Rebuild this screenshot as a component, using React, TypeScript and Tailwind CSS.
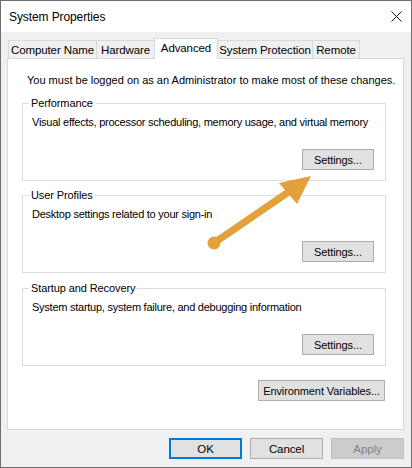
import React from "react";

const tabs = [
  { label: "Computer Name", w: "w-[89px]" },
  { label: "Hardware", w: "w-[59px]" },
  { label: "Advanced", w: "w-[64px]", active: true },
  { label: "System Protection", w: "w-[96px]" },
  { label: "Remote", w: "w-[48px]" },
];

function Tab({ label, w, active, first }: { label: string; w: string; active?: boolean; first?: boolean }) {
  if (active) {
    return (
      <div
        className={`${w} ${first ? "" : "-ml-px"} relative z-10 h-[21px] -mb-px bg-white border border-b-0 border-[#d9d9d9] flex items-center justify-center pb-[2px]`}
      >
        {label}
      </div>
    );
  }
  return (
    <div
      className={`${w} ${first ? "" : "-ml-px"} relative h-[18px] bg-[#f0f0f0] border border-b-0 border-[#d9d9d9] flex items-center justify-center pt-[1px]`}
    >
      {label}
    </div>
  );
}

function Btn({ children, className = "" }: { children: React.ReactNode; className?: string }) {
  return (
    <div
      className={`h-[21px] bg-[#e1e1e1] border border-[#adadad] flex items-center justify-center ${className}`}
    >
      {children}
    </div>
  );
}

function Group({ title, text, className = "" }: { title: string; text: string; className?: string }) {
  return (
    <div className={`relative ml-[14px] w-[364px] h-[78px] border border-[#dcdcdc] flex flex-col pt-[10px] pl-[9px] ${className}`}>
      <span className="absolute left-[6px] top-[-9px] bg-white px-[2px] leading-[16px]">{title}</span>
      <div className="h-[16px] leading-[16px] tracking-[-0.25px]">{text}</div>
      <Btn className="w-[72px] mt-[19px] self-end mr-[11px]">Settings...</Btn>
    </div>
  );
}

export default function App() {
  return (
    <div className="relative w-[412px] h-[468px] border border-[#6f6f6f] bg-[#f0f0f0] flex flex-col text-[11px] tracking-[-0.1px] leading-[16px] whitespace-nowrap text-black font-['Liberation_Sans',Arial,sans-serif]">
      {/* title bar */}
      <div className="h-[31px] bg-white flex items-center justify-between pl-[8px] pr-[9px]">
        <span className="text-[12px] tracking-[-0.1px]">System Properties</span>
        <svg width="11" height="11" viewBox="0 0 11 11" className="mt-[-1px]">
          <path d="M0.5 0.5 L10.5 10.5 M10.5 0.5 L0.5 10.5" stroke="#111" strokeWidth="1" />
        </svg>
      </div>

      {/* body */}
      <div className="flex-1 flex flex-col pl-[6px] pr-[7px] pt-[6px]">
        <div className="h-[20px] flex items-end pl-[1px] text-[11.5px]">
          {tabs.map((t, i) => (
            <Tab key={t.label} label={t.label} w={t.w} active={t.active} first={i === 0} />
          ))}
        </div>

        <div className="h-[372px] bg-white border border-[#d9d9d9] flex flex-col pt-[13px]">
          <div className="pl-[19px] h-[16px] tracking-[0px]">
            You must be logged on as an Administrator to make most of these changes.
          </div>
          <Group
            className="mt-[15px]"
            title="Performance"
            text="Visual effects, processor scheduling, memory usage, and virtual memory"
          />
          <Group className="mt-[14px]" title="User Profiles" text="Desktop settings related to your sign-in" />
          <Group
            className="mt-[15px]"
            title="Startup and Recovery"
            text="System startup, system failure, and debugging information"
          />
          <Btn className="w-[127px] mt-[14px] self-end mr-[18px]">Environment Variables...</Btn>
        </div>

        <div className="mt-[8px] flex justify-end gap-[8px] text-[11.5px]">
          <div className="w-[73px] h-[21px] bg-[#e1e1e1] border-2 border-[#0078d7] flex items-center justify-center">
            OK
          </div>
          <Btn className="w-[73px]">Cancel</Btn>
          <div className="w-[73px] h-[21px] bg-[#cccccc] border border-[#bfbfbf] text-[#838383] flex items-center justify-center">
            Apply
          </div>
        </div>
      </div>

      {/* callout arrow */}
      <svg
        className="absolute left-[-1px] top-[-1px] pointer-events-none"
        width="412"
        height="468"
        viewBox="0 0 412 468"
      >
        <line x1="214" y1="243" x2="290" y2="191" stroke="#e2a13a" strokeWidth="7" />
        <circle cx="214" cy="243" r="6.5" fill="#e2a13a" />
        <polygon points="311,176 279,183 297,204" fill="#e2a13a" />
      </svg>
    </div>
  );
}
